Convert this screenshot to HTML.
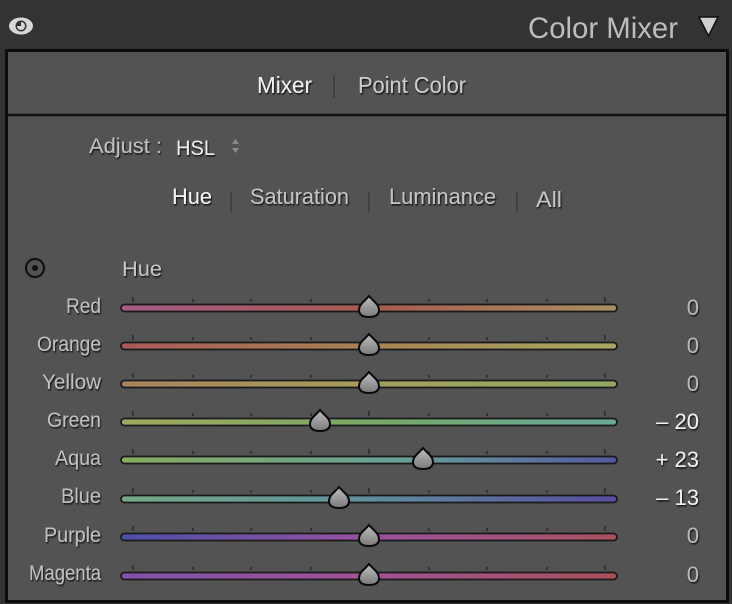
<!DOCTYPE html>
<html><head><meta charset="utf-8"><style>
html,body{margin:0;padding:0;background:#333;}
svg{display:block;}
text{font-family:"Liberation Sans",sans-serif;}
</style></head><body>
<svg width="732" height="604" viewBox="0 0 732 604" xmlns="http://www.w3.org/2000/svg">
<defs>
<filter id="sh" x="-10%" y="-10%" width="130%" height="140%"><feDropShadow dx="1" dy="1.5" stdDeviation="0.8" flood-color="#000" flood-opacity="0.8"/></filter>
<linearGradient id="th" x1="0" y1="0" x2="0" y2="1"><stop offset="0" stop-color="#bdbdbd"/><stop offset="1" stop-color="#7a7a7a"/></linearGradient>
<linearGradient id="g0"><stop offset="0" stop-color="#a85a88"/><stop offset="0.5" stop-color="#a85a50"/><stop offset="1" stop-color="#aa9060"/></linearGradient>
<linearGradient id="g1"><stop offset="0" stop-color="#a85a5a"/><stop offset="0.5" stop-color="#a88454"/><stop offset="1" stop-color="#a8a862"/></linearGradient>
<linearGradient id="g2"><stop offset="0" stop-color="#aa825c"/><stop offset="0.5" stop-color="#a49e5e"/><stop offset="1" stop-color="#90a864"/></linearGradient>
<linearGradient id="g3"><stop offset="0" stop-color="#a0a85e"/><stop offset="0.5" stop-color="#78a866"/><stop offset="1" stop-color="#68a89a"/></linearGradient>
<linearGradient id="g4"><stop offset="0" stop-color="#88ac5e"/><stop offset="0.55" stop-color="#68a298"/><stop offset="1" stop-color="#5458a0"/></linearGradient>
<linearGradient id="g5"><stop offset="0" stop-color="#76aa86"/><stop offset="0.45" stop-color="#60949c"/><stop offset="1" stop-color="#584ca0"/></linearGradient>
<linearGradient id="g6"><stop offset="0" stop-color="#4c50a8"/><stop offset="0.5" stop-color="#9852a0"/><stop offset="1" stop-color="#a8525e"/></linearGradient>
<linearGradient id="g7"><stop offset="0" stop-color="#8052a8"/><stop offset="0.5" stop-color="#a05296"/><stop offset="1" stop-color="#a8525a"/></linearGradient>
<path id="thumb" d="M0,-12 C4,-7 10,-4 10,2 C10,7 6,9 0,9 C-6,9 -10,7 -10,2 C-10,-4 -4,-7 0,-12 Z" fill="url(#th)" stroke="#0a0a0a" stroke-width="2"/>
<g id="ticks" stroke="#2a2a2a" stroke-width="1.5">
<line x1="133" y1="-11" x2="133" y2="-6"/><line x1="193" y1="-9" x2="193" y2="-6"/><line x1="251" y1="-9" x2="251" y2="-6"/><line x1="311" y1="-9" x2="311" y2="-6"/><line x1="369" y1="-11" x2="369" y2="-6"/><line x1="429" y1="-9" x2="429" y2="-6"/><line x1="487" y1="-9" x2="487" y2="-6"/><line x1="547" y1="-9" x2="547" y2="-6"/><line x1="605" y1="-11" x2="605" y2="-6"/>
</g>
</defs>
<rect width="732" height="604" fill="#333"/>
<!-- eye -->
<ellipse cx="21" cy="26" rx="12" ry="8.5" fill="#d8d8d8"/>
<circle cx="21" cy="26" r="5.5" fill="#333"/>
<path d="M21,26 L21,22 A4,4 0 1 1 17,26 Z" fill="#d8d8d8"/>
<text x="678" y="38" text-anchor="end" font-size="30" fill="#bdbdbd" textLength="150" lengthAdjust="spacingAndGlyphs">Color Mixer</text>
<path d="M699,17 L718,17 L708.5,36 Z" fill="#cfcfcf" stroke="#111" stroke-width="1.5"/>
<!-- panel -->
<rect x="6.5" y="50.5" width="721" height="551" fill="#535353" stroke="#0c0c0c" stroke-width="3"/>
<line x1="8" y1="115" x2="726" y2="115" stroke="#111" stroke-width="2.5"/>
<g filter="url(#sh)">
<text x="257" y="93" font-size="23" fill="#f0f0f0" textLength="55" lengthAdjust="spacingAndGlyphs">Mixer</text>
<text x="358" y="93" font-size="23" fill="#cccccc" textLength="108" lengthAdjust="spacingAndGlyphs">Point Color</text>
<text x="89" y="153" font-size="21" fill="#c0c0c0" textLength="73" lengthAdjust="spacingAndGlyphs">Adjust :</text>
<text x="176" y="155" font-size="21" fill="#eeeeee" textLength="39" lengthAdjust="spacingAndGlyphs">HSL</text>
<text x="172" y="204" font-size="22" fill="#f4f4f4" textLength="40" lengthAdjust="spacingAndGlyphs">Hue</text>
<text x="250" y="204" font-size="22" fill="#c4c4c4" textLength="99" lengthAdjust="spacingAndGlyphs">Saturation</text>
<text x="389" y="204" font-size="22" fill="#c4c4c4" textLength="107" lengthAdjust="spacingAndGlyphs">Luminance</text>
<text x="536" y="207" font-size="22" fill="#c4c4c4" textLength="26" lengthAdjust="spacingAndGlyphs">All</text>
<text x="122" y="276" font-size="21" fill="#c4c4c4" textLength="40" lengthAdjust="spacingAndGlyphs">Hue</text>
</g>
<line x1="334" y1="75" x2="334" y2="98" stroke="#3a3a3a" stroke-width="1.5"/>
<line x1="231" y1="192" x2="231" y2="212" stroke="#3a3a3a" stroke-width="1.5"/>
<line x1="369" y1="192" x2="369" y2="212" stroke="#3a3a3a" stroke-width="1.5"/>
<line x1="517" y1="192" x2="517" y2="212" stroke="#3a3a3a" stroke-width="1.5"/>
<path d="M232,144 L235.5,139 L239,144 Z M232,148 L235.5,153 L239,148 Z" fill="#8a8a8a"/>
<circle cx="35" cy="268" r="9" fill="none" stroke="#111" stroke-width="2.2"/>
<circle cx="35" cy="268" r="3" fill="#111"/>

<g font-size="21" text-anchor="end" filter="url(#sh)">
<text x="101" y="313" fill="#c0c0c0" textLength="35" lengthAdjust="spacingAndGlyphs">Red</text>
<text x="101" y="351" fill="#c0c0c0" textLength="64" lengthAdjust="spacingAndGlyphs">Orange</text>
<text x="101" y="389" fill="#c0c0c0" textLength="59" lengthAdjust="spacingAndGlyphs">Yellow</text>
<text x="101" y="427" fill="#c0c0c0" textLength="54" lengthAdjust="spacingAndGlyphs">Green</text>
<text x="101" y="465" fill="#c0c0c0" textLength="46" lengthAdjust="spacingAndGlyphs">Aqua</text>
<text x="101" y="503" fill="#c0c0c0" textLength="40" lengthAdjust="spacingAndGlyphs">Blue</text>
<text x="101" y="542" fill="#c0c0c0" textLength="57" lengthAdjust="spacingAndGlyphs">Purple</text>
<text x="101" y="580" fill="#c0c0c0" textLength="72" lengthAdjust="spacingAndGlyphs">Magenta</text>
</g>
<g font-size="22" text-anchor="end" filter="url(#sh)">
<text x="699" y="315" fill="#b8b8b8">0</text>
<text x="699" y="353" fill="#b8b8b8">0</text>
<text x="699" y="391" fill="#b8b8b8">0</text>
<text x="699" y="429" fill="#f0f0f0">– 20</text>
<text x="699" y="467" fill="#f0f0f0">+ 23</text>
<text x="699" y="505" fill="#f0f0f0">– 13</text>
<text x="699" y="543" fill="#b8b8b8">0</text>
<text x="699" y="582" fill="#b8b8b8">0</text>
</g>

<g transform="translate(0,308)"><use href="#ticks"/><rect x="121" y="-3.5" width="496" height="7" rx="3.5" fill="url(#g0)" stroke="#1a1a1a" stroke-width="1.8"/><use href="#thumb" x="369"/></g>
<g transform="translate(0,346)"><use href="#ticks"/><rect x="121" y="-3.5" width="496" height="7" rx="3.5" fill="url(#g1)" stroke="#1a1a1a" stroke-width="1.8"/><use href="#thumb" x="369"/></g>
<g transform="translate(0,384)"><use href="#ticks"/><rect x="121" y="-3.5" width="496" height="7" rx="3.5" fill="url(#g2)" stroke="#1a1a1a" stroke-width="1.8"/><use href="#thumb" x="369"/></g>
<g transform="translate(0,422)"><use href="#ticks"/><rect x="121" y="-3.5" width="496" height="7" rx="3.5" fill="url(#g3)" stroke="#1a1a1a" stroke-width="1.8"/><use href="#thumb" x="320"/></g>
<g transform="translate(0,460)"><use href="#ticks"/><rect x="121" y="-3.5" width="496" height="7" rx="3.5" fill="url(#g4)" stroke="#1a1a1a" stroke-width="1.8"/><use href="#thumb" x="423"/></g>
<g transform="translate(0,499)"><use href="#ticks"/><rect x="121" y="-3.5" width="496" height="7" rx="3.5" fill="url(#g5)" stroke="#1a1a1a" stroke-width="1.8"/><use href="#thumb" x="339"/></g>
<g transform="translate(0,537)"><use href="#ticks"/><rect x="121" y="-3.5" width="496" height="7" rx="3.5" fill="url(#g6)" stroke="#1a1a1a" stroke-width="1.8"/><use href="#thumb" x="369"/></g>
<g transform="translate(0,576)"><use href="#ticks"/><rect x="121" y="-3.5" width="496" height="7" rx="3.5" fill="url(#g7)" stroke="#1a1a1a" stroke-width="1.8"/><use href="#thumb" x="369"/></g>
</svg>
</body></html>
